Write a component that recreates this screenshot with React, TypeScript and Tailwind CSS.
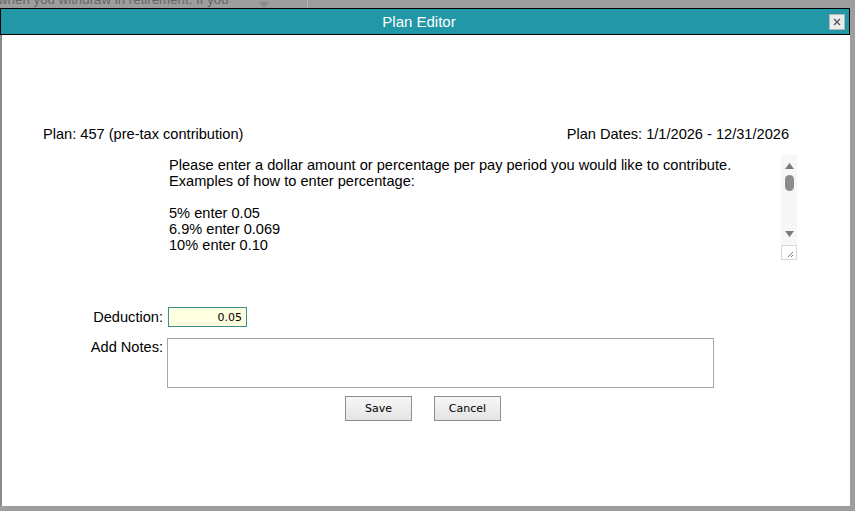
const bodyFont = { fontFamily: '"Liberation Sans", Arial, sans-serif' };

const ScrollBar = () => (
    <div className="flex w-[16px] flex-col">
        <div className="flex h-[90px] flex-col items-center bg-[#f7f7f7]">
            <svg width="9" height="6" viewBox="0 0 9 6" className="mt-[8px]">
                <path d="M4.5 0 L9 6 L0 6 Z" fill="#7a7a7a" />
            </svg>
            <div className="mt-[6px] h-[16px] w-[9px] rounded-[5px] bg-[#8c8c8c]" />
            <svg width="9" height="6" viewBox="0 0 9 6" className="mt-auto mb-[8px]">
                <path d="M0 0 L9 0 L4.5 6 Z" fill="#7a7a7a" />
            </svg>
        </div>
        <div className="relative h-[15px] border border-[#d8d8d8] bg-white">
            <svg width="14" height="13" viewBox="0 0 14 13" className="absolute left-0 top-0">
                <path d="M6 11 L11 6 M9 11 L11 9" stroke="#777" strokeWidth="1" />
            </svg>
        </div>
    </div>
);

export default function App() {
    return (
        <div className="relative h-[511px] w-[855px] overflow-hidden bg-[#9e9e9e]" style={bodyFont}>
            {/* page behind the dialog */}
            <div className="relative h-[8px] overflow-hidden">
                <div className="-ml-[2px] -mt-[8px] whitespace-nowrap text-[13.3px] leading-[16px] text-[#666]">
                    when you withdraw in retirement. If you
                </div>
                <svg width="10" height="6" viewBox="0 0 10 6" className="absolute left-[259px] top-[2px]">
                    <path d="M0 0 L10 0 L5 6 Z" fill="#8a8a8a" />
                </svg>
                <div className="absolute left-[307px] top-0 h-[8px] w-[1px] bg-[#b4b4b4]" />
            </div>

            <div className="flex h-[498px] w-[850px] flex-col">
                <div className="flex h-[27px] items-center border border-black bg-[#2297a7] pl-[8px] pr-[4px]">
                    <div className="flex-1 text-center text-[15px] leading-[17px] text-white">Plan Editor</div>
                    <button className="flex h-[16px] w-[16px] items-center justify-center border border-[#b5b5b5] bg-[#ececec]">
                        <svg width="8" height="8" viewBox="0 0 8 8">
                            <path d="M1 1 L7 7 M7 1 L1 7" stroke="#555" strokeWidth="1.4" />
                        </svg>
                    </button>
                </div>

                <div className="flex flex-1 flex-col border-l-2 border-[#8a8a8a] bg-white text-[14.6px] leading-[16px] text-black">
                    <div className="flex justify-between pl-[41px] pr-[61px] pt-[91px]">
                        <span>Plan: 457 (pre-tax contribution)</span>
                        <span>Plan Dates: 1/1/2026 - 12/31/2026</span>
                    </div>

                    <div className="ml-[163px] mr-[53px] mt-[13px] flex h-[106px]">
                        <div className="flex-1 pl-[4px] pt-[2px]">
                            <div>Please enter a dollar amount or percentage per pay period you would like to contribute.</div>
                            <div>Examples of how to enter percentage:</div>
                            <div className="h-[16px]" />
                            <div>5% enter 0.05</div>
                            <div>6.9% enter 0.069</div>
                            <div>10% enter 0.10</div>
                        </div>
                        <ScrollBar />
                    </div>

                    <div className="mt-[46px] grid grid-cols-[161px_auto] gap-x-[5px] gap-y-[11px]">
                        <label className="self-center text-right">Deduction:</label>
                        <input
                            readOnly
                            value="0.05"
                            className="h-[20px] w-[79px] border border-[#3d8f8f] bg-[#ffffe0] px-[4px] text-right text-black outline-none"
                            style={{ fontFamily: '"DejaVu Sans", Tahoma, sans-serif', fontSize: "11px" }}
                        />
                        <label className="pt-[1px] text-right">Add Notes:</label>
                        <textarea className="-ml-[1px] h-[50px] w-[547px] resize-none border border-[#a6a6a6] outline-none" />
                    </div>

                    <div className="mt-[8px] flex gap-[22px] pl-[343px]">
                        <button
                            className="h-[25px] w-[67px] border border-[#8f8f8f] bg-gradient-to-b from-[#f7f7f7] to-[#e4e4e4] text-[11px] text-black"
                            style={{ fontFamily: '"DejaVu Sans", Tahoma, sans-serif' }}
                        >
                            Save
                        </button>
                        <button
                            className="h-[25px] w-[67px] border border-[#8f8f8f] bg-gradient-to-b from-[#f7f7f7] to-[#e4e4e4] text-[11px] text-black"
                            style={{ fontFamily: '"DejaVu Sans", Tahoma, sans-serif' }}
                        >
                            Cancel
                        </button>
                    </div>
                </div>
            </div>
        </div>
    );
}
